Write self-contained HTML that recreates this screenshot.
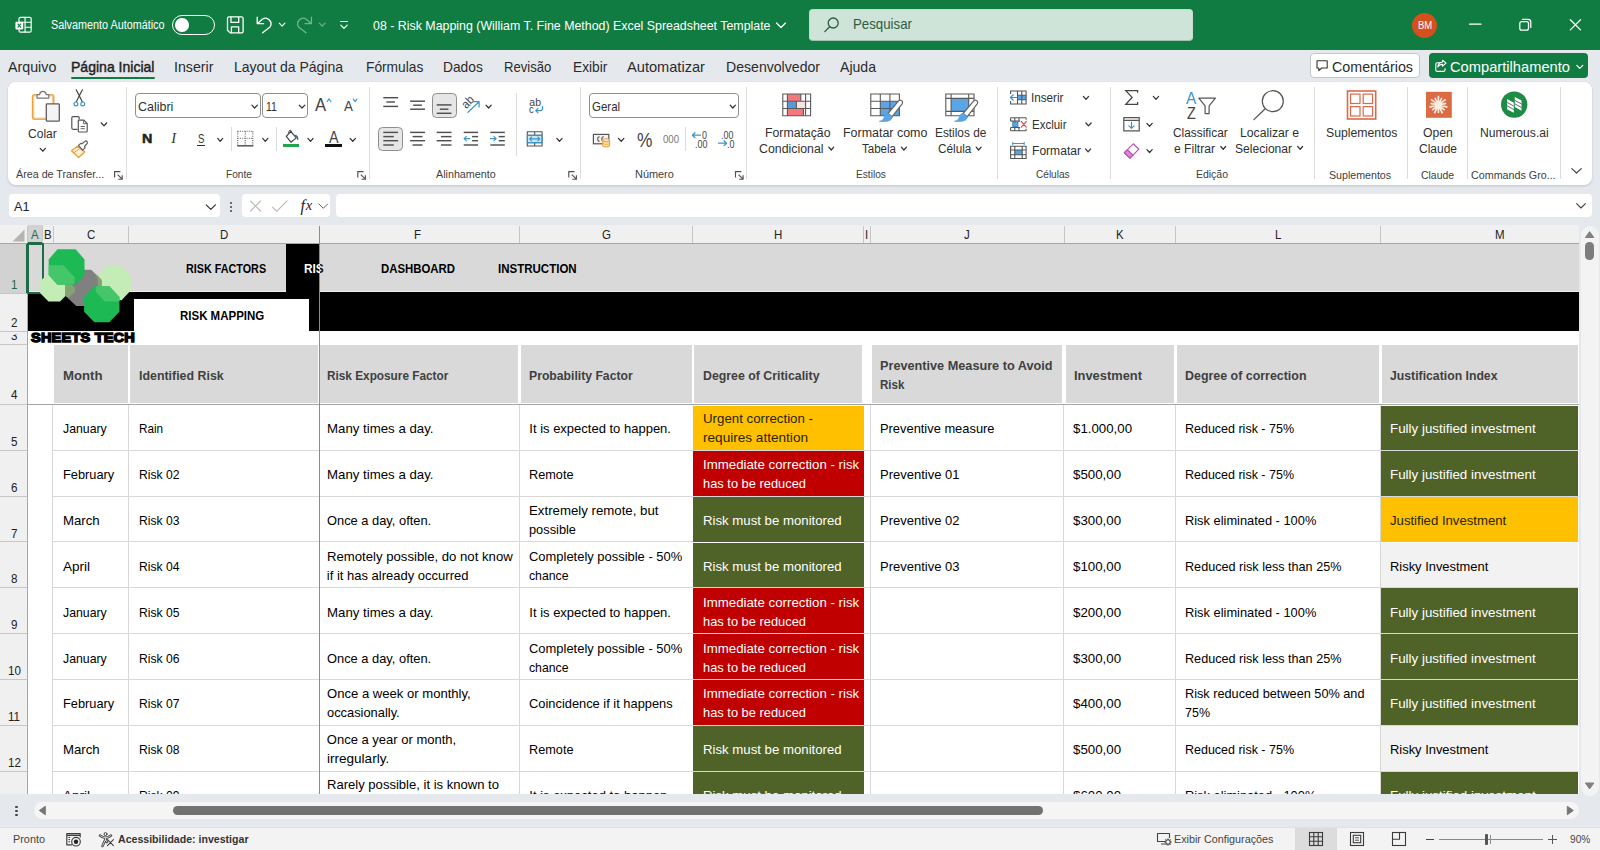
<!DOCTYPE html>
<html lang="pt-BR"><head><meta charset="utf-8"><title>08 - Risk Mapping (William T. Fine Method) Excel Spreadsheet Template</title>
<style>
html,body{margin:0;padding:0}
body{width:1600px;height:850px;position:relative;overflow:hidden;background:#e5e8ed;font-family:"Liberation Sans", sans-serif;}
body div,body span.t,body svg{position:absolute;box-sizing:border-box}
span.t{white-space:pre;transform-origin:0 50%;display:block}
</style></head><body>
<div style="left:0px;top:0px;width:1600px;height:49.5px;background:#107c41;"></div>
<svg style="left:14.300px;top:15px" width="19.500" height="19.500" viewBox="0 0 22 22" fill="none" stroke="#fff" stroke-width="1.3">
<rect x="5.6" y="2.6" width="13.8" height="16.8" rx="1.6"/>
<path d="M12.5 2.6v16.8M5.6 8.2h13.8M12.5 13.8h6.9"/>
<rect x="1.6" y="7.6" width="8.8" height="8.8" rx="1.2" fill="#fff" stroke="none"/>
<path d="M4.1 9.8l3.8 4.4M7.9 9.8l-3.8 4.4" stroke="#107c41" stroke-width="1.2"/></svg>
<span class="t" style="left:51.00px;top:16.84px;font-size:12px;line-height:16px;color:#fff;transform:scaleX(0.9002);">Salvamento Automático</span>
<div style="left:172px;top:14.5px;width:42.5px;height:20.5px;border:1.3px solid #fff;border-radius:11px"></div>
<div style="left:175.4px;top:18px;width:13.6px;height:13.6px;border-radius:50%;background:#fff"></div>
<svg style="left:220px;top:8px" width="120" height="34" viewBox="220 8 120 34" fill="none" stroke="#fff" stroke-width="1.3" stroke-linecap="round" stroke-linejoin="round">
<path d="M229 16.900h12.600a1.500 1.500 0 0 1 1.500 1.500v13a1.500 1.500 0 0 1-1.500 1.500h-11.400l-2.700-2.700v-11.800a1.500 1.500 0 0 1 1.500-1.500z"/><path d="M231 17.100v5.300h7.700v-5.300M231.400 32.700v-5.800h7.300v5.800"/>
<path d="M257.200 17.200V23.700H263.600M257.600 23.400L262.300 19.200A5.600 5.600 0 0 1 270 27L262.600 32.800"/>
<path d="M279.300 23.200l2.800 2.900 2.800-2.900" stroke-width="1.200"/>
<g opacity=".42"><path d="M311.400 17.200V23.700H305M311 23.400L306.300 19.200A5.600 5.600 0 0 0 298.600 27L306 32.800"/><path d="M319.400 23.200l2.800 2.900 2.800-2.900" stroke-width="1.200"/></g></svg>
<svg style="left:337px;top:17px" width="14" height="16" viewBox="0 0 14 16" fill="none" stroke="#fff" stroke-width="1.2" stroke-linecap="round" stroke-linejoin="round"><path d="M3.500 4.500h7M3.800 8.200l3.200 3.200 3.200-3.200"/></svg>
<span class="t" style="left:373.00px;top:16.50px;font-size:13px;line-height:17px;color:#fff;transform:scaleX(0.9529);">08 - Risk Mapping (William T. Fine Method) Excel Spreadsheet Template</span>
<svg style="left:774px;top:18px" width="14" height="14" viewBox="0 0 14 14" fill="none" stroke="#fff" stroke-width="1.2" stroke-linecap="round" stroke-linejoin="round"><path d="M2.500 5l4.500 4.500L11.500 5"/></svg>
<div style="left:809px;top:8.500px;width:383.500px;height:32.500px;background:#cfe4d8;border:1px solid #c3dccf;border-bottom-color:#9cc3ae;border-radius:4px"></div>
<svg style="left:822px;top:15px" width="20" height="20" viewBox="0 0 20 20" fill="none" stroke="#2b5b40" stroke-width="1.3" stroke-linecap="round"><circle cx="11.200" cy="8" r="5"/><path d="M7.600 11.800L2.800 16.600"/></svg>
<span class="t" style="left:853.00px;top:14.98px;font-size:14.5px;line-height:19px;color:#2e5c44;transform:scaleX(0.9150);">Pesquisar</span>
<div style="left:1412px;top:12.500px;width:25px;height:25px;border-radius:50%;background:#d5501f"></div>
<span class="t" style="left:1417.58px;top:18.64px;font-size:10px;line-height:13px;color:#fff;transform:scaleX(0.9500);">BM</span>
<svg style="left:1460px;top:10px" width="130" height="30" viewBox="0 0 130 30" fill="none" stroke="#fff" stroke-width="1.250" stroke-linecap="round" stroke-linejoin="round">
<path d="M9.500 14.200h11.500"/>
<rect x="59.800" y="11.500" width="8.700" height="8.700" rx="2"/><path d="M62.500 9.300h5.500a2.800 2.800 0 0 1 2.800 2.800v5.400"/>
<path d="M110.300 9.700l10.200 10.200M120.500 9.700l-10.200 10.200"/></svg>
<span class="t" style="left:7.70px;top:56.50px;font-size:15px;line-height:20px;color:#2b2b2b;transform:scaleX(0.9497);">Arquivo</span>
<span class="t" style="left:70.50px;top:56.50px;font-size:15px;line-height:20px;color:#1f1f1f;transform:scaleX(0.9357);-webkit-text-stroke:0.45px #1f1f1f;">Página Inicial</span>
<div style="left:70.5px;top:76.8px;width:84.5px;height:2.7px;background:#107c41;border-radius:1.500px;"></div>
<span class="t" style="left:174.00px;top:56.50px;font-size:15px;line-height:20px;color:#2b2b2b;transform:scaleX(0.9475);">Inserir</span>
<span class="t" style="left:234.00px;top:56.50px;font-size:15px;line-height:20px;color:#2b2b2b;transform:scaleX(0.9335);">Layout da Página</span>
<span class="t" style="left:365.50px;top:56.50px;font-size:15px;line-height:20px;color:#2b2b2b;transform:scaleX(0.9166);">Fórmulas</span>
<span class="t" style="left:443.00px;top:56.50px;font-size:15px;line-height:20px;color:#2b2b2b;transform:scaleX(0.9179);">Dados</span>
<span class="t" style="left:503.50px;top:56.50px;font-size:15px;line-height:20px;color:#2b2b2b;transform:scaleX(0.8726);">Revisão</span>
<span class="t" style="left:572.50px;top:56.50px;font-size:15px;line-height:20px;color:#2b2b2b;transform:scaleX(0.9143);">Exibir</span>
<span class="t" style="left:627.00px;top:56.50px;font-size:15px;line-height:20px;color:#2b2b2b;transform:scaleX(0.9744);">Automatizar</span>
<span class="t" style="left:726.00px;top:56.50px;font-size:15px;line-height:20px;color:#2b2b2b;transform:scaleX(0.9394);">Desenvolvedor</span>
<span class="t" style="left:840.00px;top:56.50px;font-size:15px;line-height:20px;color:#2b2b2b;transform:scaleX(0.9381);">Ajuda</span>
<div style="left:1310px;top:53.400px;width:110px;height:24.500px;background:#fff;border:1px solid #c3c6ca;border-radius:4px"></div>
<svg style="left:1315px;top:58px" width="14" height="16" viewBox="0 0 14 16" fill="none" stroke="#333" stroke-width="1.100" stroke-linejoin="round"><path d="M2 2.800h10.200v7.200H6.600l-2.800 2.600v-2.600H2z"/></svg>
<span class="t" style="left:1331.50px;top:56.50px;font-size:15px;line-height:20px;color:#2b2b2b;transform:scaleX(0.9524);">Comentários</span>
<div style="left:1428.500px;top:53.400px;width:159.500px;height:24.500px;background:#107c41;border-radius:4px"></div>
<svg style="left:1433px;top:58px" width="16" height="16" viewBox="0 0 16 16" fill="none" stroke="#fff" stroke-width="1.100" stroke-linecap="round" stroke-linejoin="round"><path d="M7 4.800H4.200a1.400 1.400 0 0 0-1.400 1.400v5.800a1.400 1.400 0 0 0 1.400 1.400h6.400a1.400 1.400 0 0 0 1.400-1.400v-1.400"/><path d="M9.600 2.200l3.400 3-3.400 3V6.400c-2.400 0-3.800.800-4.800 2.600.200-2.800 1.800-4.800 4.800-5z"/></svg>
<span class="t" style="left:1450.00px;top:56.50px;font-size:15px;line-height:20px;color:#fff;transform:scaleX(0.9791);">Compartilhamento</span>
<svg style="left:1574px;top:61px" width="12" height="12" viewBox="0 0 12 12" fill="none" stroke="#fff" stroke-width="1.200" stroke-linecap="round" stroke-linejoin="round"><path d="M2.800 4.400l3 3 3-3"/></svg>
<div style="left:8.500px;top:194px;width:211.500px;height:23px;background:#fff;border-radius:4px"></div>
<span class="t" style="left:14.00px;top:197.80px;font-size:13px;line-height:17px;color:#222;transform:scaleX(0.9745);">A1</span>
<svg style="left:203px;top:200px" width="16" height="14" viewBox="0 0 16 14" fill="none" stroke="#333" stroke-width="1.200" stroke-linecap="round" stroke-linejoin="round"><path d="M3.200 4.800l4.600 4.600 4.600-4.600"/></svg>
<div style="left:229.800px;top:202.3px;width:2px;height:2px;border-radius:50%;background:#444"></div>
<div style="left:229.800px;top:206.3px;width:2px;height:2px;border-radius:50%;background:#444"></div>
<div style="left:229.800px;top:210.3px;width:2px;height:2px;border-radius:50%;background:#444"></div>
<div style="left:242px;top:194px;width:88px;height:23px;background:#fff;border-radius:4px"></div>
<svg style="left:246px;top:197px" width="84" height="18" viewBox="0 0 84 18" fill="none" stroke-linecap="round" stroke-linejoin="round">
<path d="M4.500 4l10 10M14.500 4l-10 10" stroke="#b9b9b9" stroke-width="1.100"/>
<path d="M26.500 10.200l4.200 4.200 10.300-10.600" stroke="#b9b9b9" stroke-width="1.100"/>
<path d="M73 7l4.300 4.300L81.600 7" stroke="#666" stroke-width="1"/></svg>
<span class="t" style="left:300.50px;top:194.96px;font-size:16px;line-height:21px;color:#222;font-style:italic;font-family:'Liberation Serif',serif;">f</span>
<span class="t" style="left:305.80px;top:196.48px;font-size:14.5px;line-height:19px;color:#222;font-style:italic;font-family:'Liberation Serif',serif;">x</span>
<div style="left:336px;top:194px;width:1256px;height:23px;background:#fff;border-radius:4px"></div>
<svg style="left:1573px;top:199px" width="16" height="14" viewBox="0 0 16 14" fill="none" stroke="#444" stroke-width="1.100" stroke-linecap="round" stroke-linejoin="round"><path d="M3.600 4.600l4.400 4.400 4.400-4.400"/></svg>
<div style="left:8px;top:82px;width:1584px;height:102.700px;background:#fff;border-radius:8px;box-shadow:0 1px 2.500px rgba(0,0,0,.16)"></div>
<span class="t" style="left:28.40px;top:126.07px;font-size:12.5px;line-height:16px;color:#303030;transform:scaleX(0.9640);">Colar</span>
<span class="t" style="left:16.00px;top:166.82px;font-size:11.5px;line-height:15px;color:#404040;transform:scaleX(0.9323);">Área de Transfer...</span>
<div style="left:126.2px;top:87px;width:1px;height:91.5px;background:#dcdcdc;"></div>
<div style="left:135.300px;top:93.400px;width:125.300px;height:24.800px;border:1px solid #8f8f8f;border-radius:4px;background:#fff"></div>
<span class="t" style="left:137.70px;top:98.20px;font-size:13px;line-height:17px;color:#303030;transform:scaleX(0.9581);">Calibri</span>
<div style="left:262.400px;top:93.400px;width:45.400px;height:24.800px;border:1px solid #8f8f8f;border-radius:4px;background:#fff"></div>
<span class="t" style="left:266.10px;top:98.20px;font-size:13px;line-height:17px;color:#303030;transform:scaleX(0.8000);">11</span>
<span class="t" style="left:315.20px;top:93.76px;font-size:18px;line-height:23px;color:#444;transform:scaleX(0.9238);">A</span>
<span class="t" style="left:343.70px;top:96.94px;font-size:14.6px;line-height:19px;color:#444;transform:scaleX(0.9143);">A</span>
<span class="t" style="left:141.80px;top:130.19px;font-size:13.3px;line-height:17px;color:#222;font-weight:700;transform:scaleX(1.0823);-webkit-text-stroke:0.5px #222;">N</span>
<span class="t" style="left:171.30px;top:128.78px;font-size:14.5px;line-height:19px;color:#333;font-style:italic;font-family:'Liberation Serif',serif;">I</span>
<span class="t" style="left:197.60px;top:130.10px;font-size:13px;line-height:17px;color:#333;transform:scaleX(0.7380);">S</span>
<div style="left:197px;top:144.6px;width:7.9px;height:1.1px;background:#333;"></div>
<div style="left:230.9px;top:126.7px;width:1px;height:24.499999999999986px;background:#dcdcdc;"></div>
<div style="left:275.9px;top:126.7px;width:1px;height:24.499999999999986px;background:#dcdcdc;"></div>
<div style="left:282.5px;top:143.6px;width:16.7px;height:3.7px;background:#21a550;"></div>
<span class="t" style="left:329.10px;top:127.69px;font-size:15.6px;line-height:20px;color:#444;transform:scaleX(0.9225);">A</span>
<div style="left:325.1px;top:143.6px;width:16.7px;height:3.7px;background:#111;"></div>
<span class="t" style="left:226.10px;top:166.82px;font-size:11.5px;line-height:15px;color:#404040;transform:scaleX(0.8837);">Fonte</span>
<div style="left:369.1px;top:87px;width:1px;height:91.5px;background:#dcdcdc;"></div>
<div style="left:431.900px;top:93.400px;width:25px;height:24.800px;border:1px solid #8f8f8f;border-radius:4.500px;background:#e6e6e6"></div>
<span class="t" style="left:460.600px;top:94.800px;font-size:12px;line-height:14px;color:#3d3d3d;transform:rotate(-45deg) scaleX(.92);transform-origin:50% 50%">ab</span>
<div style="left:378.400px;top:126.700px;width:24.500px;height:24.800px;border:1px solid #8f8f8f;border-radius:4.500px;background:#e6e6e6"></div>
<div style="left:515.8px;top:93.1px;width:1px;height:63.099999999999994px;background:#dcdcdc;"></div>
<span class="t" style="left:529.30px;top:95.16px;font-size:10.5px;line-height:14px;color:#444;">ab</span>
<span class="t" style="left:529.30px;top:102.16px;font-size:10.5px;line-height:14px;color:#444;transform:scaleX(0.9000);">c</span>
<span class="t" style="left:436.20px;top:166.82px;font-size:11.5px;line-height:15px;color:#404040;transform:scaleX(0.9322);">Alinhamento</span>
<div style="left:580.1px;top:87px;width:1px;height:91.5px;background:#dcdcdc;"></div>
<div style="left:589.200px;top:93.400px;width:149.600px;height:24.800px;border:1px solid #8f8f8f;border-radius:4px;background:#fff"></div>
<span class="t" style="left:592.10px;top:98.20px;font-size:13px;line-height:17px;color:#303030;transform:scaleX(0.8837);">Geral</span>
<span class="t" style="left:636.60px;top:127.17px;font-size:20px;line-height:26px;color:#444;transform:scaleX(0.8653);">%</span>
<span class="t" style="left:662.60px;top:132.46px;font-size:10.5px;line-height:14px;color:#777;transform:scaleX(0.9184);">000</span>
<div style="left:684.8px;top:126.7px;width:1px;height:24.799999999999997px;background:#dcdcdc;"></div>
<span class="t" style="left:702.30px;top:128.46px;font-size:10.5px;line-height:14px;color:#444;transform:scaleX(0.8500);">0</span>
<span class="t" style="left:694.80px;top:136.66px;font-size:10.5px;line-height:14px;color:#444;transform:scaleX(0.8500);">.00</span>
<span class="t" style="left:721.20px;top:128.46px;font-size:10.5px;line-height:14px;color:#444;transform:scaleX(0.8500);">.00</span>
<span class="t" style="left:726.80px;top:136.66px;font-size:10.5px;line-height:14px;color:#444;transform:scaleX(0.8500);">.0</span>
<span class="t" style="left:635.40px;top:166.82px;font-size:11.5px;line-height:15px;color:#404040;transform:scaleX(0.9485);">Número</span>
<div style="left:746.4px;top:87px;width:1px;height:91.5px;background:#dcdcdc;"></div>
<span class="t" style="left:764.50px;top:124.57px;font-size:12.5px;line-height:16px;color:#303030;transform:scaleX(0.9820);">Formatação</span>
<span class="t" style="left:758.70px;top:141.27px;font-size:12.5px;line-height:16px;color:#303030;transform:scaleX(0.9873);">Condicional</span>
<span class="t" style="left:842.60px;top:124.57px;font-size:12.5px;line-height:16px;color:#303030;transform:scaleX(0.9959);">Formatar como</span>
<span class="t" style="left:862.20px;top:141.27px;font-size:12.5px;line-height:16px;color:#303030;transform:scaleX(0.9228);">Tabela</span>
<span class="t" style="left:935.10px;top:124.57px;font-size:12.5px;line-height:16px;color:#303030;transform:scaleX(0.9464);">Estilos de</span>
<span class="t" style="left:937.60px;top:141.27px;font-size:12.5px;line-height:16px;color:#303030;transform:scaleX(0.9397);">Célula</span>
<span class="t" style="left:856.30px;top:167.22px;font-size:11.5px;line-height:15px;color:#404040;transform:scaleX(0.8827);">Estilos</span>
<div style="left:996.7px;top:87px;width:1px;height:91.5px;background:#dcdcdc;"></div>
<span class="t" style="left:1031.20px;top:90.17px;font-size:12.5px;line-height:16px;color:#303030;transform:scaleX(0.9357);">Inserir</span>
<span class="t" style="left:1031.60px;top:116.87px;font-size:12.5px;line-height:16px;color:#303030;transform:scaleX(0.9196);">Excluir</span>
<span class="t" style="left:1031.60px;top:143.37px;font-size:12.5px;line-height:16px;color:#303030;transform:scaleX(0.9664);">Formatar</span>
<span class="t" style="left:1036.20px;top:167.22px;font-size:11.5px;line-height:15px;color:#404040;transform:scaleX(0.8759);">Células</span>
<div style="left:1110.2px;top:87px;width:1px;height:91.5px;background:#dcdcdc;"></div>
<span class="t" style="left:1186.40px;top:88.35px;font-size:16.3px;line-height:21px;color:#3a96c8;transform:scaleX(0.9471);">A</span>
<span class="t" style="left:1186.60px;top:102.75px;font-size:16.3px;line-height:21px;color:#444;transform:scaleX(0.8841);">Z</span>
<span class="t" style="left:1173.40px;top:124.87px;font-size:12.5px;line-height:16px;color:#303030;transform:scaleX(0.9487);">Classificar</span>
<span class="t" style="left:1174.30px;top:141.27px;font-size:12.5px;line-height:16px;color:#303030;transform:scaleX(0.9676);">e Filtrar</span>
<span class="t" style="left:1240.10px;top:124.87px;font-size:12.5px;line-height:16px;color:#303030;transform:scaleX(0.9776);">Localizar e</span>
<span class="t" style="left:1235.20px;top:141.27px;font-size:12.5px;line-height:16px;color:#303030;transform:scaleX(0.9665);">Selecionar</span>
<span class="t" style="left:1196.10px;top:167.22px;font-size:11.5px;line-height:15px;color:#404040;transform:scaleX(0.9098);">Edição</span>
<div style="left:1313.8px;top:87px;width:1px;height:91.5px;background:#dcdcdc;"></div>
<span class="t" style="left:1325.80px;top:124.77px;font-size:12.5px;line-height:16px;color:#303030;transform:scaleX(0.9799);">Suplementos</span>
<span class="t" style="left:1329.30px;top:167.52px;font-size:11.5px;line-height:15px;color:#404040;transform:scaleX(0.9251);">Suplementos</span>
<div style="left:1407.1px;top:87px;width:1px;height:91.5px;background:#dcdcdc;"></div>
<span class="t" style="left:1423.20px;top:124.77px;font-size:12.5px;line-height:16px;color:#303030;transform:scaleX(0.9741);">Open</span>
<span class="t" style="left:1419.00px;top:140.87px;font-size:12.5px;line-height:16px;color:#303030;transform:scaleX(0.9590);">Claude</span>
<span class="t" style="left:1420.80px;top:167.52px;font-size:11.5px;line-height:15px;color:#404040;transform:scaleX(0.9080);">Claude</span>
<div style="left:1467.2px;top:87px;width:1px;height:91.5px;background:#dcdcdc;"></div>
<span class="t" style="left:1480.20px;top:124.77px;font-size:12.5px;line-height:16px;color:#303030;transform:scaleX(0.9693);">Numerous.ai</span>
<span class="t" style="left:1470.80px;top:167.52px;font-size:11.5px;line-height:15px;color:#404040;transform:scaleX(0.9322);">Commands Gro...</span>
<div style="left:1560.0px;top:87px;width:1px;height:91.5px;background:#dcdcdc;"></div>
<svg style="left:0;top:82px" width="1600" height="106" viewBox="0 82 1600 106"><rect x="33" y="95.300" width="20.200" height="23.400" rx="1.500" fill="#fff" stroke="#f6cf98" stroke-width="2.600"/><rect x="32.500" y="94.800" width="21.200" height="24.400" rx="1.800" fill="none" stroke="#e9a23b" stroke-width="1.100"/><path d="M37 98.200v-3.600h2.600c.2-2 1.400-3.200 3.300-3.200s3.100 1.200 3.300 3.200h2.600v3.600z" fill="#fff" stroke="#777" stroke-width="1.200" stroke-linejoin="round"/><rect x="46.300" y="103.900" width="13" height="17.300" rx="0.800" fill="#f4f4f4" stroke="#5c5c5c" stroke-width="1.300"/><path d="M40.2 148.3L42.8 151.2L45.4 148.3" fill="none" stroke="#333" stroke-width="1.25" stroke-linecap="round" stroke-linejoin="round"/><path d="M76.200 89.800l6.100 12M82.400 89.800l-6.100 12" stroke="#444" stroke-width="1.200" stroke-linecap="round" fill="none"/><circle cx="75.900" cy="103.900" r="1.900" fill="none" stroke="#3a96c8" stroke-width="1.200"/><circle cx="82.700" cy="103.900" r="1.900" fill="none" stroke="#3a96c8" stroke-width="1.200"/><path d="M77.500 129.300h-4.500a1.200 1.200 0 0 1-1.200-1.200v-10.300a1.200 1.200 0 0 1 1.200-1.200h5a1.200 1.200 0 0 1 1.200 1.200v1.500" fill="none" stroke="#555" stroke-width="1.200"/><path d="M78.300 120.200h5.600l3.300 3.300v7.400a1.100 1.100 0 0 1-1.100 1.100h-6.700a1.100 1.100 0 0 1-1.100-1.100z" fill="#fff" stroke="#555" stroke-width="1.200" stroke-linejoin="round"/><path d="M83.600 120.400v3.300h3.400M80.600 126.500h4.200M80.600 128.700h4.200" fill="none" stroke="#666" stroke-width="1"/><path d="M101.3 123.0L104.0 125.9L106.6 123.0" fill="none" stroke="#333" stroke-width="1.25" stroke-linecap="round" stroke-linejoin="round"/><path d="M71.500 150.700l5.800-4.500 7.300 5.700-6 5.700z" fill="#fdf0da" stroke="#e9a23b" stroke-width="1.400" stroke-linejoin="round"/><path d="M73.800 152.800l6-4.400" stroke="#e9a23b" stroke-width="1"/><path d="M78.400 145.400l2.400-2 1.200.3 3.300-2.600c1-.7 2.700 1.100 1.900 2.200l-2.600 3.200.4 1.400-2.300 2.200z" fill="#fff" stroke="#5f5f5f" stroke-width="1.200" stroke-linejoin="round"/><path d="M114.6 177.4V171.6H120.4M117.6 174.6L122.2 179.2M122.2 175.2V179.2H118.2" fill="none" stroke="#505050" stroke-width="1.150" stroke-linejoin="miter"/><path d="M251.9 105.1L254.6 108.0L257.4 105.1" fill="none" stroke="#333" stroke-width="1.25" stroke-linecap="round" stroke-linejoin="round"/><path d="M299.2 105.1L302.0 108.0L304.8 105.1" fill="none" stroke="#333" stroke-width="1.25" stroke-linecap="round" stroke-linejoin="round"/><path d="M327.1 101.8L329.0 98.9L330.9 101.8" fill="none" stroke="#3a96c8" stroke-width="1.1" stroke-linecap="round" stroke-linejoin="round"/><path d="M353.3 99.1L355.1 101.6L356.9 99.1" fill="none" stroke="#3a96c8" stroke-width="1.1" stroke-linecap="round" stroke-linejoin="round"/><path d="M217.8 138.4L220.2 141.3L222.7 138.4" fill="none" stroke="#333" stroke-width="1.25" stroke-linecap="round" stroke-linejoin="round"/><path d="M237.700 131.300h15.100M237.700 131.300v14M252.800 131.300v14M245.250 131.300v14M237.700 138.300h15.100" fill="none" stroke="#666" stroke-width="1.100" stroke-dasharray="1.100 1.100"/><path d="M237.200 145.800h16.100" stroke="#555" stroke-width="1.500"/><path d="M262.7 138.4L265.3 141.3L267.9 138.4" fill="none" stroke="#333" stroke-width="1.25" stroke-linecap="round" stroke-linejoin="round"/><path d="M290.700 131.300l5.600 6.600-5.400 4.300-4.600-5.800z" fill="#fff" stroke="#444" stroke-width="1.200" stroke-linejoin="round"/><path d="M289 133.600c-.6-2 .1-3.300 1.300-3.300s1.500 1.500 1 2.800" fill="none" stroke="#444" stroke-width="1"/><path d="M295 135.400c1.900.3 2.900 1.600 2.700 4.500" fill="none" stroke="#2b6aa0" stroke-width="1.300"/><path d="M307.9 138.4L310.5 141.3L313.1 138.4" fill="none" stroke="#333" stroke-width="1.25" stroke-linecap="round" stroke-linejoin="round"/><path d="M350.1 138.4L352.8 141.3L355.5 138.4" fill="none" stroke="#333" stroke-width="1.25" stroke-linecap="round" stroke-linejoin="round"/><path d="M357.8 177.4V171.6H363.6M360.8 174.6L365.4 179.2M365.4 175.2V179.2H361.4" fill="none" stroke="#505050" stroke-width="1.150" stroke-linejoin="miter"/><path d="M383.3 97.7H398.1" stroke="#4f4f4f" stroke-width="1.45"/><path d="M386.4 102.0H395.0" stroke="#4f4f4f" stroke-width="1.45"/><path d="M383.3 106.4H398.1" stroke="#4f4f4f" stroke-width="1.45"/><path d="M410.1 101.2H425.0" stroke="#4f4f4f" stroke-width="1.45"/><path d="M413.2 105.2H421.9" stroke="#4f4f4f" stroke-width="1.45"/><path d="M410.1 109.2H425.0" stroke="#4f4f4f" stroke-width="1.45"/><path d="M436.7 104.9H451.5" stroke="#4f4f4f" stroke-width="1.45"/><path d="M439.8 109.2H448.4" stroke="#4f4f4f" stroke-width="1.45"/><path d="M436.7 113.3H451.5" stroke="#4f4f4f" stroke-width="1.45"/><path d="M468 112.300L479.100 101.800M473.800 101.600h5.300v5.300" fill="none" stroke="#3a96c8" stroke-width="1.200" stroke-linecap="round" stroke-linejoin="round"/><path d="M486.0 105.1L488.6 108.0L491.2 105.1" fill="none" stroke="#333" stroke-width="1.25" stroke-linecap="round" stroke-linejoin="round"/><path d="M383.3 132.4H398.1" stroke="#4f4f4f" stroke-width="1.45"/><path d="M383.3 136.6H393.8" stroke="#4f4f4f" stroke-width="1.45"/><path d="M383.3 140.7H398.1" stroke="#4f4f4f" stroke-width="1.45"/><path d="M383.3 145.0H393.8" stroke="#4f4f4f" stroke-width="1.45"/><path d="M410.1 132.4H425.0" stroke="#4f4f4f" stroke-width="1.45"/><path d="M412.6 136.6H422.5" stroke="#4f4f4f" stroke-width="1.45"/><path d="M410.1 140.7H425.0" stroke="#4f4f4f" stroke-width="1.45"/><path d="M412.6 145.0H422.5" stroke="#4f4f4f" stroke-width="1.45"/><path d="M436.7 132.4H451.5" stroke="#4f4f4f" stroke-width="1.45"/><path d="M441.0 136.6H451.5" stroke="#4f4f4f" stroke-width="1.45"/><path d="M436.7 140.7H451.5" stroke="#4f4f4f" stroke-width="1.45"/><path d="M441.0 145.0H451.5" stroke="#4f4f4f" stroke-width="1.45"/><path d="M463.7 132.4H478.1" stroke="#4f4f4f" stroke-width="1.45"/><path d="M472.1 136.6H478.1" stroke="#4f4f4f" stroke-width="1.45"/><path d="M472.1 140.7H478.1" stroke="#4f4f4f" stroke-width="1.45"/><path d="M463.7 145.0H478.1" stroke="#4f4f4f" stroke-width="1.45"/><path d="M469.800 138.650H464.200M466.400 136.400l-2.300 2.250 2.300 2.250" fill="none" stroke="#3a96c8" stroke-width="1.100" stroke-linecap="round" stroke-linejoin="round"/><path d="M490.3 132.4H504.8" stroke="#4f4f4f" stroke-width="1.45"/><path d="M498.7 136.6H504.8" stroke="#4f4f4f" stroke-width="1.45"/><path d="M498.7 140.7H504.8" stroke="#4f4f4f" stroke-width="1.45"/><path d="M490.3 145.0H504.8" stroke="#4f4f4f" stroke-width="1.45"/><path d="M490.500 138.650h5.600M493.900 136.400l2.300 2.250-2.300 2.250" fill="none" stroke="#3a96c8" stroke-width="1.100" stroke-linecap="round" stroke-linejoin="round"/><path d="M542.300 106.300c1.200 2.400-.2 4.300-2.200 4.300h-4.200M538 108.300l-2.300 2.300 2.300 2.300" fill="none" stroke="#3a96c8" stroke-width="1.200" stroke-linecap="round" stroke-linejoin="round"/><rect x="527.300" y="135.200" width="14.800" height="7.400" fill="#cfe6f5"/><path d="M527.300 131.700h14.800v14.300h-14.800zM527.300 135.200h14.800M527.300 142.600h14.800M534.700 131.700v3.500M534.700 142.600v3.400" fill="none" stroke="#555" stroke-width="1.100"/><path d="M527.300 135.200v7.400M542.100 135.200v7.400M527.300 135.200h14.800M527.300 142.600h14.800" stroke="#3a96c8" stroke-width="1.100" fill="none"/><path d="M529.600 138.900h10.200M531.600 137l-2 1.900 2 1.900M537.800 137l2 1.900-2 1.900" fill="none" stroke="#3a96c8" stroke-width="1.100" stroke-linecap="round" stroke-linejoin="round"/><path d="M556.8 138.4L559.5 141.3L562.1 138.4" fill="none" stroke="#333" stroke-width="1.25" stroke-linecap="round" stroke-linejoin="round"/><path d="M568.8 177.4V171.6H574.6M571.8 174.6L576.4 179.2M576.4 175.2V179.2H572.4" fill="none" stroke="#505050" stroke-width="1.150" stroke-linejoin="miter"/><path d="M730.2 105.1L732.8 108.0L735.4 105.1" fill="none" stroke="#333" stroke-width="1.25" stroke-linecap="round" stroke-linejoin="round"/><rect x="593.400" y="134.400" width="15.400" height="9.400" fill="#f2f2f2" stroke="#555" stroke-width="1.200"/><path d="M599.600 136.800c-2.400-.2-2.600 4.600 0 4.500M603.700 136.800c-2.400-.2-2.600 4.600 0 4.500" fill="none" stroke="#555" stroke-width="1.100"/><path d="M602.600 140.300v5c0 2 7 2 7 0v-5" fill="#fde8c8" stroke="#e9a23b" stroke-width="1.100"/><ellipse cx="606.100" cy="140.300" rx="3.500" ry="1.500" fill="#fde8c8" stroke="#e9a23b" stroke-width="1.100"/><path d="M602.600 142.800c0 2 7 2 7 0" fill="none" stroke="#e9a23b" stroke-width="1"/><path d="M618.4 138.4L621.2 141.3L623.9 138.4" fill="none" stroke="#333" stroke-width="1.25" stroke-linecap="round" stroke-linejoin="round"/><path d="M700.500 135.200h-8M695 132.700l-2.600 2.500 2.600 2.500" fill="none" stroke="#3a96c8" stroke-width="1.200" stroke-linecap="round" stroke-linejoin="round"/><path d="M718.500 143.200h8M724 140.700l2.600 2.500-2.600 2.500" fill="none" stroke="#3a96c8" stroke-width="1.200" stroke-linecap="round" stroke-linejoin="round"/><path d="M735.5 177.4V171.6H741.3M738.5 174.6L743.1 179.2M743.1 175.2V179.2H739.1" fill="none" stroke="#505050" stroke-width="1.150" stroke-linejoin="miter"/><rect x="782.800" y="94" width="27.800" height="21.800" fill="#fff"/><rect x="787.400" y="94" width="13.400" height="7.300" fill="#f2787d"/><rect x="787.400" y="108.500" width="16" height="7.300" fill="#f2787d"/><rect x="787.400" y="101.300" width="9" height="7.200" fill="#5b9bd5"/><rect x="796.400" y="101.300" width="9.200" height="7.200" fill="#fbe3e3"/><path d="M782.800 94h27.800v21.800h-27.800zM782.800 101.300h27.800M782.800 108.500h27.800M787.400 94v21.800M800.800 94v7.300M805.600 94v21.800M796.400 101.300v7.200M803.400 108.500v7.300" fill="none" stroke="#5a5a5a" stroke-width="1.100"/><path d="M828.8 147.1L831.2 150.0L833.7 147.1" fill="none" stroke="#333" stroke-width="1.25" stroke-linecap="round" stroke-linejoin="round"/><rect x="870.800" y="94" width="28.600" height="21.800" fill="#fff"/><rect x="880.300" y="101.300" width="19.100" height="14.500" fill="#5aa5e6"/><path d="M870.800 94h28.600v21.800h-28.600zM870.800 101.300h28.600M870.800 108.500h28.600M880.300 94v21.800M889.900 94v21.800" fill="none" stroke="#5a5a5a" stroke-width="1.100"/><path d="M901.4 100.600c1.300.800 1.500 2.100.700 3.300L892.0 116.800l-4-3.300L898.0 101.600c.900-1.100 2.300-1.700 3.400-1z" fill="#fff" stroke="#666" stroke-width="1.200" stroke-linejoin="round"/><path d="M887.8 113.200l4.300 3.500c.6 3.200-3.800 5.600-12.800 4.600 3.200-.9 4.300-2 5-4.400.6-2.200 1.900-3.400 3.500-3.700z" fill="#5aa5e6" stroke="#4a95d8" stroke-width=".6"/><path d="M901.4 147.1L903.9 150.0L906.4 147.1" fill="none" stroke="#333" stroke-width="1.25" stroke-linecap="round" stroke-linejoin="round"/><rect x="945.800" y="94" width="28.200" height="21.800" fill="#fff"/><rect x="951.100" y="98.400" width="17.600" height="13" fill="#5aa5e6"/><path d="M945.800 94h28.200v21.800h-28.200zM945.800 98.400h28.200M945.800 111.400h28.200M951.100 94v21.800M968.700 94v21.800" fill="none" stroke="#5a5a5a" stroke-width="1.100"/><path d="M976.5 100.600c1.300.800 1.500 2.100.700 3.300L967.1 116.800l-4-3.300L973.1 101.600c.900-1.100 2.300-1.700 3.400-1z" fill="#fff" stroke="#666" stroke-width="1.200" stroke-linejoin="round"/><path d="M962.9 113.200l4.300 3.500c.6 3.200-3.800 5.600-12.800 4.600 3.200-.9 4.300-2 5-4.400.6-2.200 1.900-3.400 3.500-3.700z" fill="#5aa5e6" stroke="#4a95d8" stroke-width=".6"/><path d="M976.2 147.1L978.6 150.0L981.1 147.1" fill="none" stroke="#333" stroke-width="1.25" stroke-linecap="round" stroke-linejoin="round"/><rect x="1010.600" y="91" width="15.500" height="13" fill="#fff"/><rect x="1017.500" y="95.300" width="8.600" height="4.400" fill="#5aa5e6"/><path d="M1010.600 91h15.500v13h-15.500zM1010.600 95.300h15.500M1010.600 99.700h15.500M1017.500 91v13M1021.800 91v13" fill="none" stroke="#555" stroke-width="1.100"/><rect x="1009.500" y="94" width="7.400" height="7" fill="#fff"/><path d="M1017 97.500h-6.500M1013.300 94.800l-2.800 2.700 2.800 2.700" fill="none" stroke="#3a96c8" stroke-width="1.200" stroke-linecap="round" stroke-linejoin="round"/><path d="M1083.4 96.4L1086.0 99.3L1088.6 96.4" fill="none" stroke="#333" stroke-width="1.25" stroke-linecap="round" stroke-linejoin="round"/><path d="M1010.600 117.800h15.500M1010.600 130.800h15.500M1010.600 117.800v3.300M1010.600 127.500v3.300M1026.100 117.800v2M1026.100 128.800v2M1014.800 117.800v13M1019 117.800v3.300M1019 127.500v3.300M1010.600 121.100h9.500M1010.600 127.500h9.500" fill="none" stroke="#555" stroke-width="1.100"/><rect x="1012.700" y="122.100" width="5.300" height="4.400" fill="#5aa5e6" stroke="#3f7fbf" stroke-width=".8"/><path d="M1021.300 121.500l5 5.600M1026.300 121.500l-5 5.600" stroke="#e05050" stroke-width="1.200" stroke-linecap="round"/><path d="M1085.9 123.0L1088.5 125.9L1091.1 123.0" fill="none" stroke="#333" stroke-width="1.25" stroke-linecap="round" stroke-linejoin="round"/><rect x="1010.600" y="146.300" width="15.500" height="12.200" fill="#fff"/><rect x="1014.800" y="150" width="7.400" height="4.700" fill="#5aa5e6"/><path d="M1010.600 146.300h15.500v12.200h-15.500zM1010.600 150h15.500M1010.600 154.700h15.500M1014.800 146.300v12.200M1022.200 146.300v12.200" fill="none" stroke="#555" stroke-width="1.100"/><path d="M1012.700 143.500h11.500M1012.700 142v3M1024.200 142v3" stroke="#3a96c8" stroke-width="1" fill="none"/><path d="M1085.5 148.9L1088.1 151.8L1090.6 148.9" fill="none" stroke="#333" stroke-width="1.25" stroke-linecap="round" stroke-linejoin="round"/><path d="M1137.600 92.800v-2.200h-11.800l6.300 6.800-6.300 6.900h11.800v-2.200" fill="none" stroke="#444" stroke-width="1.300" stroke-linejoin="miter"/><path d="M1153.3 96.4L1156.0 99.4L1158.6 96.4" fill="none" stroke="#333" stroke-width="1.25" stroke-linecap="round" stroke-linejoin="round"/><path d="M1123.800 117.600h15.400v13.300h-15.400zM1123.800 120.300h15.400" fill="#fff" stroke="#555" stroke-width="1.200"/><path d="M1131.500 122v6.200M1128.900 125.800l2.600 2.600 2.600-2.600" fill="none" stroke="#3a96c8" stroke-width="1.200" stroke-linecap="round" stroke-linejoin="round"/><path d="M1146.9 123.4L1149.5 126.3L1152.2 123.4" fill="none" stroke="#333" stroke-width="1.25" stroke-linecap="round" stroke-linejoin="round"/><path d="M1124.400 152.700l8.900-8.900 5.600 5.400-8.900 8.900z" fill="#fff" stroke="#b84fb8" stroke-width="1.200" stroke-linejoin="round"/><path d="M1124.400 152.700l2.900-2.900 5.600 5.400-2.900 2.900z" fill="#d98bd9" stroke="#b84fb8" stroke-width="1.200" stroke-linejoin="round"/><path d="M1146.9 149.6L1149.5 152.5L1152.2 149.6" fill="none" stroke="#333" stroke-width="1.25" stroke-linecap="round" stroke-linejoin="round"/><path d="M1198.800 98.200h16.600l-6.300 7.600v7.800h-4v-7.800z" fill="none" stroke="#555" stroke-width="1.200" stroke-linejoin="round"/><path d="M1220.8 146.5L1223.2 149.4L1225.6 146.5" fill="none" stroke="#333" stroke-width="1.25" stroke-linecap="round" stroke-linejoin="round"/><circle cx="1272.800" cy="101.200" r="10.500" fill="none" stroke="#555" stroke-width="1.200"/><path d="M1265.200 108.800l-11.300 10.800" stroke="#555" stroke-width="1.300" stroke-linecap="round"/><path d="M1297.7 146.5L1300.2 149.4L1302.6 146.5" fill="none" stroke="#333" stroke-width="1.25" stroke-linecap="round" stroke-linejoin="round"/><rect x="1347.500" y="91" width="28.200" height="28" fill="#fff" stroke="#d96a4b" stroke-width="1.600"/><rect x="1350.6" y="94.1" width="9.400" height="9.400" fill="none" stroke="#d96a4b" stroke-width="1.200"/><rect x="1350.6" y="106.6" width="9.400" height="9.400" fill="none" stroke="#d96a4b" stroke-width="1.200"/><rect x="1363.2" y="94.1" width="9.400" height="9.400" fill="none" stroke="#d96a4b" stroke-width="1.200"/><rect x="1363.2" y="106.6" width="9.400" height="9.400" fill="none" stroke="#d96a4b" stroke-width="1.200"/><rect x="1426" y="91.800" width="25.800" height="26" fill="#da6b43"/><path d="M1438.40 103.60L1438.40 95.80M1439.05 103.75L1441.87 97.89M1439.57 104.16L1445.67 99.30M1439.86 104.77L1446.20 103.32M1439.86 105.43L1447.47 107.17M1439.57 106.04L1444.65 110.09M1439.05 106.45L1442.44 113.48M1438.40 106.60L1438.40 113.10M1437.75 106.45L1434.36 113.48M1437.23 106.04L1432.15 110.09M1436.94 105.43L1429.33 107.17M1436.94 104.77L1430.60 103.32M1437.23 104.16L1431.13 99.30M1437.75 103.75L1434.93 97.89" stroke="#fcebdf" stroke-width="1.700"/><circle cx="1438.400" cy="105.100" r="3.400" fill="#fcebdf"/><circle cx="1514.200" cy="104.600" r="13.200" fill="#1e8c45"/><g fill="#fff"><path d="M1507.100 99l6.700 3.700v10.100l-6.700-3.600zM1514.800 97l6.700 3.600v10.200l-6.700-3.800z"/></g><path d="M1507.100 102.400l6.700 3.700M1507.100 105.800l6.700 3.700M1514.800 100.400l6.700 3.600M1514.800 103.800l6.700 3.700" stroke="#2c3b40" stroke-width=".750" fill="none"/><path d="M1571.8 168.6L1576.5 173.0L1581.3 168.6" fill="none" stroke="#444" stroke-width="1.2" stroke-linecap="round" stroke-linejoin="round"/></svg>
<div style="left:0px;top:225px;width:1578.5px;height:18.5px;background:#f0f0f0;"></div>
<div style="left:0px;top:243.5px;width:27.5px;height:550.5px;background:#f0f0f0;"></div>
<svg style="left:0;top:225px" width="28" height="19" viewBox="0 0 28 19"><path d="M24.5 4.5 L24.5 16.5 L12.5 16.5 Z" fill="#b4b4b4"/></svg>
<div style="left:27.5px;top:225px;width:15.5px;height:18.5px;background:#d2d2d2;"></div>
<div style="left:27.5px;top:242.0px;width:15.5px;height:2px;background:#1e6b45;"></div>
<div style="left:0px;top:243.5px;width:27.5px;height:49.5px;background:#d2d2d2;"></div>
<div style="left:26px;top:243.5px;width:2px;height:49.5px;background:#1e6b45;"></div>
<div style="left:27.0px;top:226px;width:1px;height:17.5px;background:#c6c6c6;"></div>
<div style="left:42.0px;top:226px;width:1px;height:17.5px;background:#c6c6c6;"></div>
<div style="left:52.5px;top:226px;width:1px;height:17.5px;background:#c6c6c6;"></div>
<div style="left:128.0px;top:226px;width:1px;height:17.5px;background:#c6c6c6;"></div>
<div style="left:319.0px;top:226px;width:1px;height:17.5px;background:#c6c6c6;"></div>
<div style="left:519.0px;top:226px;width:1px;height:17.5px;background:#c6c6c6;"></div>
<div style="left:692.0px;top:226px;width:1px;height:17.5px;background:#c6c6c6;"></div>
<div style="left:863.0px;top:226px;width:1px;height:17.5px;background:#c6c6c6;"></div>
<div style="left:870.0px;top:226px;width:1px;height:17.5px;background:#c6c6c6;"></div>
<div style="left:1063.5px;top:226px;width:1px;height:17.5px;background:#c6c6c6;"></div>
<div style="left:1175.0px;top:226px;width:1px;height:17.5px;background:#c6c6c6;"></div>
<div style="left:1380.0px;top:226px;width:1px;height:17.5px;background:#c6c6c6;"></div>
<div style="left:0px;top:243.0px;width:1578.5px;height:1px;background:#a6a6a6;"></div>
<span class="t" style="left:31.16px;top:226.97px;font-size:12.5px;line-height:16px;color:#1e6b45;transform:scaleX(0.9200);">A</span>
<span class="t" style="left:44.16px;top:226.97px;font-size:12.5px;line-height:16px;color:#222;transform:scaleX(0.9200);">B</span>
<span class="t" style="left:86.85px;top:226.97px;font-size:12.5px;line-height:16px;color:#222;transform:scaleX(0.9200);">C</span>
<span class="t" style="left:219.85px;top:226.97px;font-size:12.5px;line-height:16px;color:#222;transform:scaleX(0.9200);">D</span>
<span class="t" style="left:414.49px;top:226.97px;font-size:12.5px;line-height:16px;color:#222;transform:scaleX(0.9200);">F</span>
<span class="t" style="left:601.52px;top:226.97px;font-size:12.5px;line-height:16px;color:#222;transform:scaleX(0.9200);">G</span>
<span class="t" style="left:774.35px;top:226.97px;font-size:12.5px;line-height:16px;color:#222;transform:scaleX(0.9200);">H</span>
<span class="t" style="left:865.40px;top:226.97px;font-size:12.5px;line-height:16px;color:#222;transform:scaleX(0.9200);">I</span>
<span class="t" style="left:964.12px;top:226.97px;font-size:12.5px;line-height:16px;color:#222;transform:scaleX(0.9200);">J</span>
<span class="t" style="left:1116.16px;top:226.97px;font-size:12.5px;line-height:16px;color:#222;transform:scaleX(0.9200);">K</span>
<span class="t" style="left:1274.80px;top:226.97px;font-size:12.5px;line-height:16px;color:#222;transform:scaleX(0.9200);">L</span>
<span class="t" style="left:1494.71px;top:226.97px;font-size:12.5px;line-height:16px;color:#222;transform:scaleX(0.9200);">M</span>
<div style="left:28px;top:243.5px;width:1550.5px;height:550.5px;background:#fff;"></div>
<div style="left:53px;top:449.75px;width:1525.5px;height:1px;background:#d8d8d8;"></div>
<div style="left:53px;top:495.6px;width:1525.5px;height:1px;background:#d8d8d8;"></div>
<div style="left:53px;top:541.45px;width:1525.5px;height:1px;background:#d8d8d8;"></div>
<div style="left:53px;top:587.3000000000001px;width:1525.5px;height:1px;background:#d8d8d8;"></div>
<div style="left:53px;top:633.1500000000001px;width:1525.5px;height:1px;background:#d8d8d8;"></div>
<div style="left:53px;top:679.0000000000001px;width:1525.5px;height:1px;background:#d8d8d8;"></div>
<div style="left:53px;top:724.8500000000001px;width:1525.5px;height:1px;background:#d8d8d8;"></div>
<div style="left:53px;top:770.7000000000002px;width:1525.5px;height:1px;background:#d8d8d8;"></div>
<div style="left:52.2px;top:404px;width:1px;height:390px;background:#d8d8d8;"></div>
<div style="left:127.80000000000001px;top:404px;width:1px;height:390px;background:#d8d8d8;"></div>
<div style="left:519.0px;top:404px;width:1px;height:390px;background:#d8d8d8;"></div>
<div style="left:870.0px;top:404px;width:1px;height:390px;background:#d8d8d8;"></div>
<div style="left:1063.4px;top:404px;width:1px;height:390px;background:#d8d8d8;"></div>
<div style="left:1175.0px;top:404px;width:1px;height:390px;background:#d8d8d8;"></div>
<div style="left:1380.0px;top:404px;width:1px;height:390px;background:#d8d8d8;"></div>
<div style="left:28px;top:244.0px;width:1550.5px;height:48.30000000000001px;background:#d9d9d9;"></div>
<div style="left:28px;top:291.3px;width:1550.5px;height:1.1px;background:#ededed;"></div>
<div style="left:28px;top:292.3px;width:1550.5px;height:38.39999999999998px;background:#000;"></div>
<div style="left:286.2px;top:244px;width:33.6px;height:50px;background:#000;"></div>
<div style="left:134px;top:299.2px;width:175.2px;height:32px;background:#fff;"></div>
<div style="left:54px;top:345.4px;width:73.5px;height:57.30000000000001px;background:#d9d9d9;"></div>
<div style="left:130px;top:345.4px;width:188.3px;height:57.30000000000001px;background:#d9d9d9;"></div>
<div style="left:320.2px;top:345.4px;width:197.40000000000003px;height:57.30000000000001px;background:#d9d9d9;"></div>
<div style="left:521.2px;top:345.4px;width:170.39999999999998px;height:57.30000000000001px;background:#d9d9d9;"></div>
<div style="left:694.4px;top:345.4px;width:168.0px;height:57.30000000000001px;background:#d9d9d9;"></div>
<div style="left:872px;top:345.4px;width:189.9000000000001px;height:57.30000000000001px;background:#d9d9d9;"></div>
<div style="left:1065.7px;top:345.4px;width:107.89999999999986px;height:57.30000000000001px;background:#d9d9d9;"></div>
<div style="left:1177.2px;top:345.4px;width:201.5999999999999px;height:57.30000000000001px;background:#d9d9d9;"></div>
<div style="left:1382.1px;top:345.4px;width:196.4000000000001px;height:57.30000000000001px;background:#d9d9d9;"></div>
<div style="left:28px;top:403.8px;width:1550.5px;height:1.2px;background:#a6a6a6;"></div>
<div style="left:693px;top:405.79999999999995px;width:170.79999999999995px;height:44.05000000000007px;background:#ffc000;"></div>
<div style="left:1380.8px;top:405.79999999999995px;width:197.70000000000005px;height:44.05000000000007px;background:#4f6228;"></div>
<div style="left:693px;top:450.85px;width:170.79999999999995px;height:44.85000000000002px;background:#c00000;"></div>
<div style="left:1380.8px;top:450.85px;width:197.70000000000005px;height:44.85000000000002px;background:#4f6228;"></div>
<div style="left:693px;top:496.70000000000005px;width:170.79999999999995px;height:44.85000000000002px;background:#4f6228;"></div>
<div style="left:1380.8px;top:496.70000000000005px;width:197.70000000000005px;height:44.85000000000002px;background:#ffc000;"></div>
<div style="left:693px;top:542.5500000000001px;width:170.79999999999995px;height:44.85000000000002px;background:#4f6228;"></div>
<div style="left:1380.8px;top:542.5500000000001px;width:197.70000000000005px;height:44.85000000000002px;background:#f2f2f2;"></div>
<div style="left:693px;top:588.4000000000001px;width:170.79999999999995px;height:44.85000000000002px;background:#c00000;"></div>
<div style="left:1380.8px;top:588.4000000000001px;width:197.70000000000005px;height:44.85000000000002px;background:#4f6228;"></div>
<div style="left:693px;top:634.2500000000001px;width:170.79999999999995px;height:44.85000000000002px;background:#c00000;"></div>
<div style="left:1380.8px;top:634.2500000000001px;width:197.70000000000005px;height:44.85000000000002px;background:#4f6228;"></div>
<div style="left:693px;top:680.1000000000001px;width:170.79999999999995px;height:44.85000000000002px;background:#c00000;"></div>
<div style="left:1380.8px;top:680.1000000000001px;width:197.70000000000005px;height:44.85000000000002px;background:#4f6228;"></div>
<div style="left:693px;top:725.9500000000002px;width:170.79999999999995px;height:44.85000000000002px;background:#4f6228;"></div>
<div style="left:1380.8px;top:725.9500000000002px;width:197.70000000000005px;height:44.85000000000002px;background:#f2f2f2;"></div>
<div style="left:693px;top:771.8000000000002px;width:170.79999999999995px;height:22.199999999999818px;background:#4f6228;"></div>
<div style="left:1380.8px;top:771.8000000000002px;width:197.70000000000005px;height:22.199999999999818px;background:#4f6228;"></div>
<div style="left:319px;top:226px;width:1px;height:568px;background:#8c8c8c;"></div>
<div style="left:0px;top:292.5px;width:27.5px;height:1px;background:#c6c6c6;"></div>
<span class="t" style="left:11.27px;top:276.57px;font-size:12.5px;line-height:16px;color:#1e6b45;transform:scaleX(0.9300);">1</span>
<div style="left:0px;top:330.5px;width:27.5px;height:1px;background:#c6c6c6;"></div>
<span class="t" style="left:11.27px;top:314.57px;font-size:12.5px;line-height:16px;color:#222;transform:scaleX(0.9300);">2</span>
<div style="left:0px;top:343.5px;width:27.5px;height:1px;background:#c6c6c6;"></div>
<span class="t" style="left:11.27px;top:327.57px;font-size:12.5px;line-height:16px;color:#222;transform:scaleX(0.9300);clip-path:inset(7px 0 0 0);">3</span>
<div style="left:0px;top:403.5px;width:27.5px;height:1px;background:#c6c6c6;"></div>
<span class="t" style="left:11.27px;top:386.67px;font-size:12.5px;line-height:16px;color:#222;transform:scaleX(0.9300);">4</span>
<div style="left:0px;top:449.75px;width:27.5px;height:1px;background:#c6c6c6;"></div>
<span class="t" style="left:11.27px;top:433.82px;font-size:12.5px;line-height:16px;color:#222;transform:scaleX(0.9300);">5</span>
<div style="left:0px;top:495.6px;width:27.5px;height:1px;background:#c6c6c6;"></div>
<span class="t" style="left:11.27px;top:479.67px;font-size:12.5px;line-height:16px;color:#222;transform:scaleX(0.9300);">6</span>
<div style="left:0px;top:541.45px;width:27.5px;height:1px;background:#c6c6c6;"></div>
<span class="t" style="left:11.27px;top:525.52px;font-size:12.5px;line-height:16px;color:#222;transform:scaleX(0.9300);">7</span>
<div style="left:0px;top:587.3000000000001px;width:27.5px;height:1px;background:#c6c6c6;"></div>
<span class="t" style="left:11.27px;top:571.37px;font-size:12.5px;line-height:16px;color:#222;transform:scaleX(0.9300);">8</span>
<div style="left:0px;top:633.1500000000001px;width:27.5px;height:1px;background:#c6c6c6;"></div>
<span class="t" style="left:11.27px;top:617.22px;font-size:12.5px;line-height:16px;color:#222;transform:scaleX(0.9300);">9</span>
<div style="left:0px;top:679.0000000000001px;width:27.5px;height:1px;background:#c6c6c6;"></div>
<span class="t" style="left:8.03px;top:663.07px;font-size:12.5px;line-height:16px;color:#222;transform:scaleX(0.9300);">10</span>
<div style="left:0px;top:724.8500000000001px;width:27.5px;height:1px;background:#c6c6c6;"></div>
<span class="t" style="left:8.46px;top:708.92px;font-size:12.5px;line-height:16px;color:#222;transform:scaleX(0.9300);">11</span>
<div style="left:0px;top:770.7000000000002px;width:27.5px;height:1px;background:#c6c6c6;"></div>
<span class="t" style="left:8.03px;top:754.77px;font-size:12.5px;line-height:16px;color:#222;transform:scaleX(0.9300);">12</span>
<div style="left:27px;top:243.5px;width:1px;height:550.5px;background:#a6a6a6;"></div>
<div style="left:27px;top:242.8px;width:17px;height:51px;border:2px solid #1e6b45;"></div>
<span class="t" style="left:185.70px;top:260.00px;font-size:13px;line-height:17px;color:#000;font-weight:700;transform:scaleX(0.8295);">RISK FACTORS</span>
<div style="left:286px;top:244px;width:33.500px;height:49px;overflow:hidden;background:transparent">
<span class="t" style="left:17.60px;top:16.00px;font-size:13px;line-height:17px;color:#fff;font-weight:700;transform:scaleX(0.9090);">RIS</span>
</div>
<div style="left:320px;top:244px;width:10px;height:49px;overflow:hidden;background:transparent">
<span class="t" style="left:-16.40px;top:16.00px;font-size:13px;line-height:17px;color:#111;font-weight:700;transform:scaleX(0.9090);">RIS</span>
</div>
<span class="t" style="left:381.00px;top:260.00px;font-size:13px;line-height:17px;color:#000;font-weight:700;transform:scaleX(0.8757);">DASHBOARD</span>
<span class="t" style="left:498.30px;top:260.00px;font-size:13px;line-height:17px;color:#000;font-weight:700;transform:scaleX(0.8858);">INSTRUCTION</span>
<span class="t" style="left:180.20px;top:306.80px;font-size:13px;line-height:17px;color:#000;font-weight:700;transform:scaleX(0.8831);">RISK MAPPING</span>
<svg style="left:0;top:0" width="200" height="360" viewBox="0 0 200 360"><polygon points="48.5,273.0 60.1,273.0 68.5,281.4 68.5,293.1 60.1,301.5 48.5,301.5 40.1,293.1 40.1,281.4" fill="#c3ecb6"/><polygon points="106.7,265.9 121.6,265.9 130.7,275.6 130.7,290.5 121.6,300.2 106.7,300.2 97.7,290.5 97.7,275.6" fill="#c3ecb6"/><polygon points="76.3,269.8 91.2,269.8 101.6,280.1 101.6,295.7 91.2,306.0 76.3,306.0 65.3,295.7 65.3,280.1" fill="#808080"/><polygon points="65.3,281.4 68.5,281.4 75.0,287.9 75.0,291.8 68.5,297.6 65.3,295.7" fill="#86a374"/><polygon points="95.1,273.9 97.7,275.6 101.6,280.1 101.6,286.6 97.7,290.5 97.7,278.8" fill="#86a374"/><polygon points="57.5,249.3 75.7,249.3 84.5,259.4 84.5,275.0 75.7,284.7 57.5,284.7 48.7,275.0 48.7,259.4" fill="#1db954"/><polygon points="48.7,265.2 63.4,265.2 74.6,276.9 74.6,282.7 72.4,284.7 57.5,284.7 48.7,275.0" fill="#45c668"/><polygon points="94.4,286.3 109.3,286.3 119.4,297.0 119.4,311.8 109.3,322.2 94.4,322.2 84.1,311.8 84.1,297.0" fill="#1db954"/><polygon points="95.7,286.3 109.3,286.3 119.4,297.0 119.4,301.5 104.8,301.5 95.7,291.8" fill="#45c668"/></svg>
<span class="t" style="left:30.60px;top:329.43px;font-size:13.2px;line-height:17px;color:#000;font-weight:700;transform:scaleX(1.1004);-webkit-text-stroke:1.35px #000;letter-spacing:.2px;">SHEETS TECH</span>
<span class="t" style="left:62.60px;top:366.90px;font-size:13px;line-height:17px;color:#404040;font-weight:700;transform:scaleX(1.0132);">Month</span>
<span class="t" style="left:138.80px;top:366.90px;font-size:13px;line-height:17px;color:#404040;font-weight:700;transform:scaleX(0.9532);">Identified Risk</span>
<span class="t" style="left:327.00px;top:366.90px;font-size:13px;line-height:17px;color:#404040;font-weight:700;transform:scaleX(0.9076);">Risk Exposure Factor</span>
<span class="t" style="left:529.30px;top:366.90px;font-size:13px;line-height:17px;color:#404040;font-weight:700;transform:scaleX(0.9382);">Probability Factor</span>
<span class="t" style="left:703.00px;top:366.90px;font-size:13px;line-height:17px;color:#404040;font-weight:700;transform:scaleX(0.9485);">Degree of Criticality</span>
<span class="t" style="left:880.00px;top:357.30px;font-size:13px;line-height:17px;color:#404040;font-weight:700;transform:scaleX(0.9759);">Preventive Measure to Avoid</span>
<span class="t" style="left:880.00px;top:376.30px;font-size:13px;line-height:17px;color:#404040;font-weight:700;transform:scaleX(0.8919);">Risk</span>
<span class="t" style="left:1073.50px;top:366.90px;font-size:13px;line-height:17px;color:#404040;font-weight:700;transform:scaleX(0.9907);">Investment</span>
<span class="t" style="left:1185.00px;top:366.90px;font-size:13px;line-height:17px;color:#404040;font-weight:700;transform:scaleX(0.9555);">Degree of correction</span>
<span class="t" style="left:1390.00px;top:366.90px;font-size:13px;line-height:17px;color:#404040;font-weight:700;transform:scaleX(0.9418);">Justification Index</span>
<div style="left:28px;top:404px;width:1550.5px;height:390px;overflow:hidden">
<span class="t" style="left:34.60px;top:16.30px;font-size:13px;line-height:17px;color:#000;transform:scaleX(0.9449);">January</span>
<span class="t" style="left:110.80px;top:16.30px;font-size:13px;line-height:17px;color:#000;transform:scaleX(0.9009);">Rain</span>
<span class="t" style="left:298.80px;top:16.30px;font-size:13px;line-height:17px;color:#000;transform:scaleX(1.0188);">Many times a day.</span>
<span class="t" style="left:501.30px;top:16.30px;font-size:13px;line-height:17px;color:#000;">It is expected to happen.</span>
<span class="t" style="left:674.70px;top:6.30px;font-size:13px;line-height:17px;color:#262600;transform:scaleX(1.0218);">Urgent correction -</span>
<span class="t" style="left:674.70px;top:25.30px;font-size:13px;line-height:17px;color:#262600;transform:scaleX(1.0453);">requires attention</span>
<span class="t" style="left:852.00px;top:16.30px;font-size:13px;line-height:17px;color:#000;transform:scaleX(0.9903);">Preventive measure</span>
<span class="t" style="left:1045.40px;top:16.30px;font-size:13px;line-height:17px;color:#000;transform:scaleX(1.0217);">$1.000,00</span>
<span class="t" style="left:1157.10px;top:16.30px;font-size:13px;line-height:17px;color:#000;transform:scaleX(0.9607);">Reduced risk - 75%</span>
<span class="t" style="left:1362.30px;top:16.30px;font-size:13px;line-height:17px;color:#fff;transform:scaleX(1.0288);">Fully justified investment</span>
<span class="t" style="left:34.60px;top:62.15px;font-size:13px;line-height:17px;color:#000;transform:scaleX(0.9840);">February</span>
<span class="t" style="left:110.80px;top:62.15px;font-size:13px;line-height:17px;color:#000;transform:scaleX(0.9341);">Risk 02</span>
<span class="t" style="left:298.80px;top:62.15px;font-size:13px;line-height:17px;color:#000;transform:scaleX(1.0188);">Many times a day.</span>
<span class="t" style="left:501.30px;top:62.15px;font-size:13px;line-height:17px;color:#000;transform:scaleX(0.9774);">Remote</span>
<span class="t" style="left:674.70px;top:52.15px;font-size:13px;line-height:17px;color:#fff;transform:scaleX(1.0199);">Immediate correction - risk</span>
<span class="t" style="left:674.70px;top:71.15px;font-size:13px;line-height:17px;color:#fff;transform:scaleX(0.9896);">has to be reduced</span>
<span class="t" style="left:852.00px;top:62.15px;font-size:13px;line-height:17px;color:#000;">Preventive 01</span>
<span class="t" style="left:1045.40px;top:62.15px;font-size:13px;line-height:17px;color:#000;transform:scaleX(1.0234);">$500,00</span>
<span class="t" style="left:1157.10px;top:62.15px;font-size:13px;line-height:17px;color:#000;transform:scaleX(0.9607);">Reduced risk - 75%</span>
<span class="t" style="left:1362.30px;top:62.15px;font-size:13px;line-height:17px;color:#fff;transform:scaleX(1.0288);">Fully justified investment</span>
<span class="t" style="left:34.60px;top:108.00px;font-size:13px;line-height:17px;color:#000;transform:scaleX(1.0159);">March</span>
<span class="t" style="left:110.80px;top:108.00px;font-size:13px;line-height:17px;color:#000;transform:scaleX(0.9341);">Risk 03</span>
<span class="t" style="left:298.80px;top:108.00px;font-size:13px;line-height:17px;color:#000;transform:scaleX(0.9897);">Once a day, often.</span>
<span class="t" style="left:501.30px;top:98.00px;font-size:13px;line-height:17px;color:#000;transform:scaleX(1.0184);">Extremely remote, but</span>
<span class="t" style="left:501.30px;top:117.00px;font-size:13px;line-height:17px;color:#000;transform:scaleX(0.9853);">possible</span>
<span class="t" style="left:674.70px;top:108.00px;font-size:13px;line-height:17px;color:#fff;transform:scaleX(1.0157);">Risk must be monitored</span>
<span class="t" style="left:852.00px;top:108.00px;font-size:13px;line-height:17px;color:#000;">Preventive 02</span>
<span class="t" style="left:1045.40px;top:108.00px;font-size:13px;line-height:17px;color:#000;transform:scaleX(1.0234);">$300,00</span>
<span class="t" style="left:1157.10px;top:108.00px;font-size:13px;line-height:17px;color:#000;transform:scaleX(0.9876);">Risk eliminated - 100%</span>
<span class="t" style="left:1362.30px;top:108.00px;font-size:13px;line-height:17px;color:#262600;transform:scaleX(1.0114);">Justified Investment</span>
<span class="t" style="left:34.60px;top:153.85px;font-size:13px;line-height:17px;color:#000;transform:scaleX(1.0417);">April</span>
<span class="t" style="left:110.80px;top:153.85px;font-size:13px;line-height:17px;color:#000;transform:scaleX(0.9341);">Risk 04</span>
<span class="t" style="left:298.80px;top:143.85px;font-size:13px;line-height:17px;color:#000;transform:scaleX(1.0117);">Remotely possible, do not know</span>
<span class="t" style="left:298.80px;top:162.85px;font-size:13px;line-height:17px;color:#000;">if it has already occurred</span>
<span class="t" style="left:501.30px;top:143.85px;font-size:13px;line-height:17px;color:#000;transform:scaleX(0.9954);">Completely possible - 50%</span>
<span class="t" style="left:501.30px;top:162.85px;font-size:13px;line-height:17px;color:#000;transform:scaleX(0.9422);">chance</span>
<span class="t" style="left:674.70px;top:153.85px;font-size:13px;line-height:17px;color:#fff;transform:scaleX(1.0157);">Risk must be monitored</span>
<span class="t" style="left:852.00px;top:153.85px;font-size:13px;line-height:17px;color:#000;">Preventive 03</span>
<span class="t" style="left:1045.40px;top:153.85px;font-size:13px;line-height:17px;color:#000;transform:scaleX(1.0234);">$100,00</span>
<span class="t" style="left:1157.10px;top:153.85px;font-size:13px;line-height:17px;color:#000;transform:scaleX(0.9705);">Reduced risk less than 25%</span>
<span class="t" style="left:1362.30px;top:153.85px;font-size:13px;line-height:17px;color:#000;transform:scaleX(0.9931);">Risky Investment</span>
<span class="t" style="left:34.60px;top:199.70px;font-size:13px;line-height:17px;color:#000;transform:scaleX(0.9449);">January</span>
<span class="t" style="left:110.80px;top:199.70px;font-size:13px;line-height:17px;color:#000;transform:scaleX(0.9341);">Risk 05</span>
<span class="t" style="left:298.80px;top:199.70px;font-size:13px;line-height:17px;color:#000;transform:scaleX(1.0188);">Many times a day.</span>
<span class="t" style="left:501.30px;top:199.70px;font-size:13px;line-height:17px;color:#000;">It is expected to happen.</span>
<span class="t" style="left:674.70px;top:189.70px;font-size:13px;line-height:17px;color:#fff;transform:scaleX(1.0199);">Immediate correction - risk</span>
<span class="t" style="left:674.70px;top:208.70px;font-size:13px;line-height:17px;color:#fff;transform:scaleX(0.9896);">has to be reduced</span>
<span class="t" style="left:1045.40px;top:199.70px;font-size:13px;line-height:17px;color:#000;transform:scaleX(1.0234);">$200,00</span>
<span class="t" style="left:1157.10px;top:199.70px;font-size:13px;line-height:17px;color:#000;transform:scaleX(0.9876);">Risk eliminated - 100%</span>
<span class="t" style="left:1362.30px;top:199.70px;font-size:13px;line-height:17px;color:#fff;transform:scaleX(1.0288);">Fully justified investment</span>
<span class="t" style="left:34.60px;top:245.55px;font-size:13px;line-height:17px;color:#000;transform:scaleX(0.9449);">January</span>
<span class="t" style="left:110.80px;top:245.55px;font-size:13px;line-height:17px;color:#000;transform:scaleX(0.9341);">Risk 06</span>
<span class="t" style="left:298.80px;top:245.55px;font-size:13px;line-height:17px;color:#000;transform:scaleX(0.9897);">Once a day, often.</span>
<span class="t" style="left:501.30px;top:235.55px;font-size:13px;line-height:17px;color:#000;transform:scaleX(0.9954);">Completely possible - 50%</span>
<span class="t" style="left:501.30px;top:254.55px;font-size:13px;line-height:17px;color:#000;transform:scaleX(0.9422);">chance</span>
<span class="t" style="left:674.70px;top:235.55px;font-size:13px;line-height:17px;color:#fff;transform:scaleX(1.0199);">Immediate correction - risk</span>
<span class="t" style="left:674.70px;top:254.55px;font-size:13px;line-height:17px;color:#fff;transform:scaleX(0.9896);">has to be reduced</span>
<span class="t" style="left:1045.40px;top:245.55px;font-size:13px;line-height:17px;color:#000;transform:scaleX(1.0234);">$300,00</span>
<span class="t" style="left:1157.10px;top:245.55px;font-size:13px;line-height:17px;color:#000;transform:scaleX(0.9705);">Reduced risk less than 25%</span>
<span class="t" style="left:1362.30px;top:245.55px;font-size:13px;line-height:17px;color:#fff;transform:scaleX(1.0288);">Fully justified investment</span>
<span class="t" style="left:34.60px;top:291.40px;font-size:13px;line-height:17px;color:#000;transform:scaleX(0.9840);">February</span>
<span class="t" style="left:110.80px;top:291.40px;font-size:13px;line-height:17px;color:#000;transform:scaleX(0.9341);">Risk 07</span>
<span class="t" style="left:298.80px;top:281.40px;font-size:13px;line-height:17px;color:#000;transform:scaleX(1.0061);">Once a week or monthly,</span>
<span class="t" style="left:298.80px;top:300.40px;font-size:13px;line-height:17px;color:#000;transform:scaleX(0.9895);">occasionally.</span>
<span class="t" style="left:501.30px;top:291.40px;font-size:13px;line-height:17px;color:#000;transform:scaleX(0.9892);">Coincidence if it happens</span>
<span class="t" style="left:674.70px;top:281.40px;font-size:13px;line-height:17px;color:#fff;transform:scaleX(1.0199);">Immediate correction - risk</span>
<span class="t" style="left:674.70px;top:300.40px;font-size:13px;line-height:17px;color:#fff;transform:scaleX(0.9896);">has to be reduced</span>
<span class="t" style="left:1045.40px;top:291.40px;font-size:13px;line-height:17px;color:#000;transform:scaleX(1.0234);">$400,00</span>
<span class="t" style="left:1157.10px;top:281.40px;font-size:13px;line-height:17px;color:#000;transform:scaleX(0.9779);">Risk reduced between 50% and</span>
<span class="t" style="left:1157.10px;top:300.40px;font-size:13px;line-height:17px;color:#000;transform:scaleX(0.9604);">75%</span>
<span class="t" style="left:1362.30px;top:291.40px;font-size:13px;line-height:17px;color:#fff;transform:scaleX(1.0288);">Fully justified investment</span>
<span class="t" style="left:34.60px;top:337.25px;font-size:13px;line-height:17px;color:#000;transform:scaleX(1.0159);">March</span>
<span class="t" style="left:110.80px;top:337.25px;font-size:13px;line-height:17px;color:#000;transform:scaleX(0.9341);">Risk 08</span>
<span class="t" style="left:298.80px;top:327.25px;font-size:13px;line-height:17px;color:#000;">Once a year or month,</span>
<span class="t" style="left:298.80px;top:346.25px;font-size:13px;line-height:17px;color:#000;transform:scaleX(1.0415);">irregularly.</span>
<span class="t" style="left:501.30px;top:337.25px;font-size:13px;line-height:17px;color:#000;transform:scaleX(0.9774);">Remote</span>
<span class="t" style="left:674.70px;top:337.25px;font-size:13px;line-height:17px;color:#fff;transform:scaleX(1.0157);">Risk must be monitored</span>
<span class="t" style="left:1045.40px;top:337.25px;font-size:13px;line-height:17px;color:#000;transform:scaleX(1.0234);">$500,00</span>
<span class="t" style="left:1157.10px;top:337.25px;font-size:13px;line-height:17px;color:#000;transform:scaleX(0.9607);">Reduced risk - 75%</span>
<span class="t" style="left:1362.30px;top:337.25px;font-size:13px;line-height:17px;color:#000;transform:scaleX(0.9931);">Risky Investment</span>
<span class="t" style="left:34.60px;top:383.10px;font-size:13px;line-height:17px;color:#000;transform:scaleX(1.0417);">April</span>
<span class="t" style="left:110.80px;top:383.10px;font-size:13px;line-height:17px;color:#000;transform:scaleX(0.9341);">Risk 09</span>
<span class="t" style="left:298.80px;top:371.50px;font-size:13px;line-height:17px;color:#000;transform:scaleX(1.0044);">Rarely possible, it is known to</span>
<span class="t" style="left:501.30px;top:383.10px;font-size:13px;line-height:17px;color:#000;">It is expected to happen.</span>
<span class="t" style="left:674.70px;top:383.10px;font-size:13px;line-height:17px;color:#fff;transform:scaleX(1.0157);">Risk must be monitored</span>
<span class="t" style="left:1045.40px;top:383.10px;font-size:13px;line-height:17px;color:#000;transform:scaleX(1.0234);">$600,00</span>
<span class="t" style="left:1157.10px;top:383.10px;font-size:13px;line-height:17px;color:#000;transform:scaleX(0.9876);">Risk eliminated - 100%</span>
<span class="t" style="left:1362.30px;top:383.10px;font-size:13px;line-height:17px;color:#fff;transform:scaleX(1.0288);">Fully justified investment</span>
</div>
<div style="left:1580.500px;top:226px;width:18px;height:569.500px;background:#f3f3f3;border-radius:9px"></div>
<svg style="left:1583px;top:228px" width="14" height="12" viewBox="0 0 14 12"><path d="M2.400 9.500L6.600 3.600l4.200 5.900z" fill="#808080" stroke="#808080" stroke-width="1" stroke-linejoin="round"/></svg>
<div style="left:1585.200px;top:242.300px;width:8.600px;height:17.400px;background:#7d7d7d;border-radius:4.300px"></div>
<svg style="left:1583px;top:780px" width="14" height="12" viewBox="0 0 14 12"><path d="M2.400 3L6.600 8.900 10.800 3z" fill="#808080" stroke="#808080" stroke-width="1" stroke-linejoin="round"/></svg>
<div style="left:15.400px;top:805.8px;width:2.300px;height:2.300px;border-radius:50%;background:#444"></div>
<div style="left:15.400px;top:810px;width:2.300px;height:2.300px;border-radius:50%;background:#444"></div>
<div style="left:15.400px;top:814.2px;width:2.300px;height:2.300px;border-radius:50%;background:#444"></div>
<div style="left:33.500px;top:802px;width:1545px;height:17px;background:#f5f5f5;border-radius:8.500px"></div>
<svg style="left:36px;top:803px" width="12" height="15" viewBox="0 0 12 15"><path d="M9.300 3.300L3.300 7.500l6 4.200z" fill="#767676" stroke="#767676" stroke-width="1" stroke-linejoin="round"/></svg>
<svg style="left:1564px;top:803px" width="12" height="15" viewBox="0 0 12 15"><path d="M3.300 3.300l6 4.200-6 4.200z" fill="#767676" stroke="#767676" stroke-width="1" stroke-linejoin="round"/></svg>
<div style="left:172.500px;top:806.200px;width:870.500px;height:8.800px;background:#727272;border-radius:4.400px"></div>
<div style="left:0px;top:826.5px;width:1600px;height:23.5px;background:#f3f3f3;"></div>
<div style="left:0px;top:826.5px;width:1600px;height:1px;background:#e1e1e1;"></div>
<span class="t" style="left:12.50px;top:831.52px;font-size:11.5px;line-height:15px;color:#444;transform:scaleX(0.9442);">Pronto</span>
<svg style="left:60px;top:828px" width="60" height="22" viewBox="60 828 60 22" fill="none" stroke="#3d3d3d" stroke-linecap="round" stroke-linejoin="round">
<path d="M72 844.800H66.800V833.600H80.200V837.500M66.800 835.300H80.200" stroke-width="1.150" stroke-linecap="butt"/>
<path d="M68.400 837.400H70.200M68.400 839.600H70M68.400 841.800H70" stroke-width="1" stroke-linecap="butt"/>
<circle cx="76" cy="841.700" r="4.300" fill="#f3f3f3" stroke-width="1.150"/><circle cx="76" cy="841.700" r="2.200" fill="#222" stroke="none"/>
<g stroke-width="2.500"><path d="M100 835.500Q103 837.900 105.500 837.700Q108 837.900 111 835.500M105.500 837.700V840.300M105.200 840L102.500 846M105.800 840L107 842.200"/></g>
<g stroke="#f3f3f3" stroke-width=".800"><path d="M100 835.500Q103 837.900 105.500 837.700Q108 837.900 111 835.500M105.500 837.700V840.300M105.200 840L102.500 846M105.800 840L107 842.200"/></g>
<circle cx="105.500" cy="834.100" r="1.500" fill="#f3f3f3" stroke-width="1"/>
<path d="M107.500 839.700L113.400 845.700M113.400 839.700L107.500 845.700" stroke-width="1.100"/></svg>
<span class="t" style="left:118.00px;top:831.52px;font-size:11.5px;line-height:15px;color:#333;font-weight:700;transform:scaleX(0.9197);">Acessibilidade: investigar</span>
<svg style="left:1155px;top:830px" width="20" height="18" viewBox="0 0 20 18" fill="none" stroke="#444" stroke-width="1.100" stroke-linejoin="round"><path d="M10 11.500H2.500v-8h12V8M6 14h4"/><circle cx="13" cy="12" r="2.300"/><path d="M13 8.300v1.400M13 14.300v1.400M9.300 12h1.400M15.300 12h1.400M10.400 9.400l1 1M14.600 13.600l1 1M15.600 9.400l-1 1M11.400 13.600l-1 1" stroke-width="1"/></svg>
<span class="t" style="left:1174.40px;top:831.52px;font-size:11.5px;line-height:15px;color:#444;transform:scaleX(0.9368);">Exibir Configurações</span>
<div style="left:1295px;top:827.5px;width:41.5px;height:22.5px;background:#dcdcdc;"></div>
<svg style="left:1307px;top:830px" width="18" height="18" viewBox="0 0 18 18" fill="none" stroke="#3b3b3b" stroke-width="1.100"><rect x="2.500" y="2.500" width="13" height="13"/><path d="M2.500 6.800h13M2.500 11.200h13M6.800 2.500v13M11.200 2.500v13"/></svg>
<svg style="left:1348px;top:830px" width="18" height="18" viewBox="0 0 18 18" fill="none" stroke="#3b3b3b" stroke-width="1.100"><rect x="2.500" y="2.500" width="13" height="13"/><rect x="5.300" y="5.300" width="7.400" height="7.400"/><path d="M7 7.800h4M7 10.200h4" stroke-width=".9"/></svg>
<svg style="left:1390px;top:830px" width="18" height="18" viewBox="0 0 18 18" fill="none" stroke="#3b3b3b" stroke-width="1.100"><rect x="2.500" y="2.500" width="13" height="13"/><path d="M2.500 9.300h7v-6.800"/></svg>
<div style="left:1425.5px;top:838.5px;width:8.5px;height:1.2px;background:#444;"></div>
<div style="left:1439px;top:838.7px;width:104px;height:1px;background:#8a8a8a;"></div>
<div style="left:1490.3px;top:834.5px;width:1px;height:9px;background:#8a8a8a;"></div>
<div style="left:1484.7px;top:833.5px;width:3.8px;height:11px;background:#555;border-radius:1px;"></div>
<div style="left:1547.5px;top:838.6px;width:9px;height:1px;background:#555;"></div>
<div style="left:1551.5px;top:834.6px;width:1px;height:9px;background:#555;"></div>
<span class="t" style="left:1569.70px;top:831.52px;font-size:11.5px;line-height:15px;color:#444;transform:scaleX(0.8814);">90%</span>
</body></html>
